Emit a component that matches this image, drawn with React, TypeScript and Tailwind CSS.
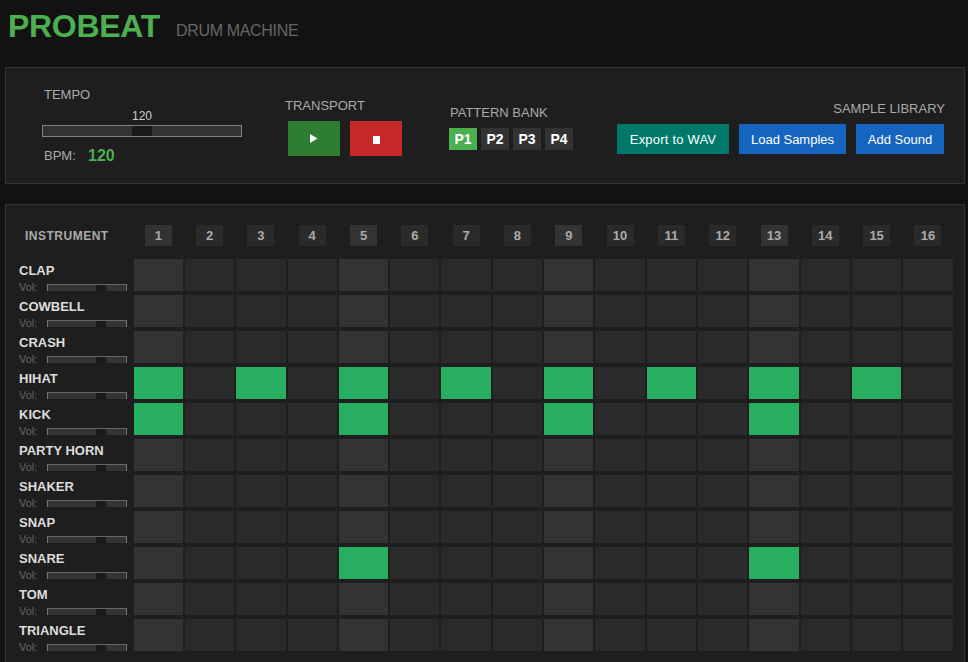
const instruments = ['CLAP', 'COWBELL', 'CRASH', 'HIHAT', 'KICK', 'PARTY HORN', 'SHAKER', 'SNAP', 'SNARE', 'TOM', 'TRIANGLE']

const steps = Array.from({ length: 16 }, (_, i) => i)

const pattern: Record<string, number[]> = {
  HIHAT: [0, 2, 4, 6, 8, 10, 12, 14],
  KICK: [0, 4, 8, 12],
  SNARE: [4, 12],
}

function StepCell({ step, active }: { step: number; active: boolean }) {
  const bg = active ? 'bg-[#27ae60]' : step % 4 === 0 ? 'bg-[#333333]' : 'bg-[#2a2a2a]'
  return <div className={`h-8 flex-1 ${bg}`} />
}

function TrackRow({ name }: { name: string }) {
  const active = pattern[name] ?? []
  return (
    <div className="flex h-8">
      <div className="w-[114.6px] shrink-0">
        <div className="mt-[3px] h-[18px] text-[13px] leading-[18px] font-bold text-[#dddddd]">{name}</div>
        <div className="flex items-start">
          <span className="w-7 text-[11px] leading-[14px] text-[#666666]">Vol:</span>
          <div className="mt-1 flex h-[7px] w-20 border-x border-t border-x-[#777777] border-t-[#666666]">
            <div className="w-[48px] bg-[#333333]" />
            <div className="w-[10px] bg-[#1a1a1a]" />
            <div className="flex-1 bg-[#333333]" />
          </div>
        </div>
      </div>
      <div className="flex flex-1 gap-[2px]">
        {steps.map((s) => (
          <StepCell key={s} step={s} active={active.includes(s)} />
        ))}
      </div>
    </div>
  )
}

function ActionButton({ label, className }: { label: string; className: string }) {
  return (
    <button className={`flex h-[30px] items-center justify-center pt-[2px] text-[13px] text-white ${className}`}>
      {label}
    </button>
  )
}

export default function App() {
  return (
    <div className="h-[662px] overflow-hidden bg-[#121212] font-['Liberation_Sans',Arial,sans-serif]">
      <header className="flex h-[67px] items-start pl-2">
        <h1 className="mt-2 text-[32px] leading-[37px] font-bold tracking-[-0.3px] text-[#4caf50]">PROBEAT</h1>
        <span className="mt-[22px] ml-4 text-base leading-[18px] tracking-[-0.33px] text-[#666666]">DRUM MACHINE</span>
      </header>

      <section className="mr-[3px] ml-[5px] flex h-[117px] border border-[#333333] bg-[#1e1e1e]">
        <div className="ml-[36px] w-[243px] pt-[19px]">
          <div className="ml-[2px] text-[13px] leading-4 text-[#aaaaaa]">TEMPO</div>
          <div className="mt-[6px] w-[200px] text-center text-xs leading-[14px] text-[#cccccc]">120</div>
          <div className="mt-[2px] flex h-3 w-[200px] border border-[#808080]">
            <div className="w-[89px] bg-[#333333]" />
            <div className="w-5 bg-[#1a1a1a]" />
            <div className="flex-1 bg-[#333333]" />
          </div>
          <div className="mt-[10px] ml-[2px] flex h-[18px] items-center">
            <span className="w-11 text-[13px] text-[#aaaaaa]">BPM:</span>
            <span className="text-base font-bold text-[#4caf50]">120</span>
          </div>
        </div>

        <div className="w-[164px] pt-[30px]">
          <div className="text-[13px] leading-4 text-[#aaaaaa]">TRANSPORT</div>
          <div className="mt-[7px] ml-[3px] flex gap-[10px]">
            <button className="flex h-[35px] w-[52px] items-center justify-center bg-[#2e7d32]">
              <svg width="8" height="9" viewBox="0 0 8 9" className="mr-[1px] mb-[1px]">
                <path d="M0 0 L7.5 4.5 L0 9 Z" fill="#ffffff" />
              </svg>
            </button>
            <button className="flex h-[35px] w-[52px] items-center justify-center bg-[#c62828]">
              <div className="mt-[3px] h-2 w-[7px] bg-white" />
            </button>
          </div>
        </div>

        <div className="w-[168px] pt-[37px]">
          <div className="ml-[1px] text-[13px] leading-4 text-[#aaaaaa]">PATTERN BANK</div>
          <div className="mt-[7px] flex gap-1">
            <button className="h-[22px] w-7 bg-[#4caf50] text-sm font-bold text-white">P1</button>
            <button className="h-[22px] w-7 bg-[#333333] text-sm font-bold text-white">P2</button>
            <button className="h-[22px] w-7 bg-[#333333] text-sm font-bold text-white">P3</button>
            <button className="h-[22px] w-7 bg-[#333333] text-sm font-bold text-white">P4</button>
          </div>
        </div>

        <div className="flex w-[328px] flex-col items-end pt-[33px]">
          <div className="text-[13px] leading-4 text-[#aaaaaa]">SAMPLE LIBRARY</div>
          <div className="mt-[7px] mr-[1px] flex gap-[10px]">
            <ActionButton label="Export to WAV" className="w-[112px] bg-[#00796b] tracking-[0.2px]" />
            <ActionButton label="Load Samples" className="w-[107px] bg-[#1565c0]" />
            <ActionButton label="Add Sound" className="w-[88px] bg-[#1565c0]" />
          </div>
        </div>
      </section>

      <section className="mt-5 mr-[3px] ml-[5px] border border-[#333333] bg-[#1e1e1e] pt-5 pr-[11.4px] pb-4 pl-[13px]">
        <div className="mb-[13px] flex h-[21px] items-center">
          <div className="w-[114.6px] shrink-0 pl-[6px] text-xs font-bold tracking-[0.5px] text-[#aaaaaa]">INSTRUMENT</div>
          <div className="flex flex-1 gap-[2px]">
            {steps.map((s) => (
              <div key={s} className="flex flex-1 justify-center">
                <div
                  className={`flex h-[21px] w-[27px] items-center justify-center text-[13px] font-bold text-[#aaaaaa] ${
                    s % 4 === 0 ? 'bg-[#333333]' : 'bg-[#2a2a2a]'
                  }`}
                >
                  {s + 1}
                </div>
              </div>
            ))}
          </div>
        </div>
        <div className="flex flex-col gap-1">
          {instruments.map((name) => (
            <TrackRow key={name} name={name} />
          ))}
        </div>
      </section>
    </div>
  )
}
